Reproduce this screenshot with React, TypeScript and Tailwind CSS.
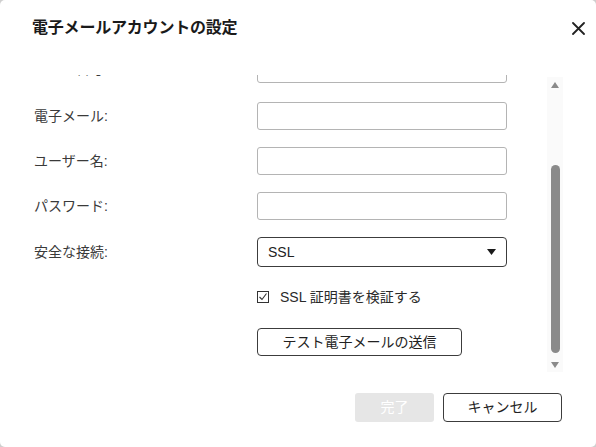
import React from "react";

const font = { fontFamily: '"Liberation Sans", "Noto Sans CJK JP", sans-serif' };

function Field({ label }: { label: string }) {
  return (
    <div className="flex items-center h-[28px]">
      <div className="w-[223px] text-[14px] text-[#3a3a3a]">{label}</div>
      <div className="w-[250px] h-[28px] rounded-[3px] border border-[#b4b4b4] bg-white" />
    </div>
  );
}

export default function App() {
  return (
    <div className="w-[596px] h-[447px] bg-[#cfcfcf] overflow-hidden" style={font}>
      <div className="w-full h-full bg-white rounded-[5px] flex flex-col">
        {/* Header */}
        <div className="h-[56px] flex items-center justify-between pl-[32px] pr-[11px] shrink-0">
          <h1 className="text-[16px] font-bold text-[#1a1a1a] tracking-[-0.2px]">電子メールアカウントの設定</h1>
          <svg width="13" height="13" viewBox="0 0 13 13" className="mt-[1px]">
            <path d="M1 1L12 12M12 1L1 12" stroke="#222" strokeWidth="1.8" strokeLinecap="round" />
          </svg>
        </div>

        {/* Body */}
        <div className="h-[316px] pt-[19px] pr-[33px] flex shrink-0">
          <div className="flex-1 overflow-hidden pl-[34px] h-[297px]">
            <div className="-mt-[20px] flex flex-col">
              <Field label="ポート番号:" />
              <div className="mt-[19px] flex flex-col gap-[17px]">
                <Field label="電子メール:" />
                <Field label="ユーザー名:" />
                <Field label="パスワード:" />
              </div>
              <div className="mt-[17px] flex items-center h-[30px]">
                <div className="w-[223px] text-[14px] text-[#3a3a3a]">安全な接続:</div>
                <div className="w-[250px] h-[30px] rounded-[4px] border border-[#3c3c3c] flex items-center justify-between pl-[10px] pr-[10px] text-[14px] text-[#222]">
                  <span>SSL</span>
                  <svg width="9" height="6" viewBox="0 0 9 6">
                    <path d="M0 0H9L4.5 6Z" fill="#1a1a1a" />
                  </svg>
                </div>
              </div>
              <div className="mt-[20px] h-[20px] flex items-center pl-[223px] text-[14px] text-[#2a2a2a]">
                <svg width="12" height="12" viewBox="0 0 12 12" className="mr-[11px]">
                  <rect x="0.5" y="0.5" width="11" height="11" fill="none" stroke="#333" strokeWidth="1" />
                  <path d="M2.5 6L5 8.5L9.5 2.5" fill="none" stroke="#333" strokeWidth="1.1" />
                </svg>
                <span>SSL 証明書を検証する</span>
              </div>
              <div className="mt-[21px] pl-[223px]">
                <button className="w-[205px] h-[28px] rounded-[4px] border border-[#3c3c3c] bg-white text-[14px] text-[#222] flex items-center justify-center">
                  テスト電子メールの送信
                </button>
              </div>
            </div>
          </div>

          {/* Scrollbar */}
          <div className="w-[16px] h-[295px] mt-[2px] bg-[#fafafa] flex flex-col items-center">
            <svg width="8" height="6" viewBox="0 0 8 6" className="mt-[5px]">
              <path d="M0 6H8L4 0Z" fill="#8a8a8a" />
            </svg>
            <div className="mt-[77px] w-[9px] h-[188px] rounded-full bg-[#8a8a8a]" />
            <svg width="8" height="6" viewBox="0 0 8 6" className="mt-[9px]">
              <path d="M0 0H8L4 6Z" fill="#8a8a8a" />
            </svg>
          </div>
        </div>

        {/* Footer */}
        <div className="flex justify-end gap-[9px] pr-[34px] pt-[21px]">
          <button className="w-[79px] h-[29px] rounded-[3px] bg-[#e6e6e6] text-white text-[14px]">完了</button>
          <button className="w-[119px] h-[29px] rounded-[4px] border border-[#3c3c3c] bg-white text-[14px] text-[#222]">キャンセル</button>
        </div>
      </div>
    </div>
  );
}
